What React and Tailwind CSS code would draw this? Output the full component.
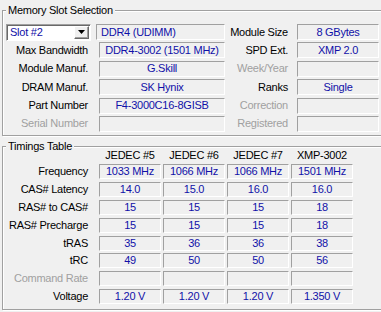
import React from "react";

const fieldCls =
  "h-full border border-t-[#a0a0a0] border-l-[#a0a0a0] border-b-white border-r-white flex items-center text-[#1010a8] whitespace-nowrap overflow-hidden";

function Field({ children, w, ml, left }) {
  return (
    <div className={fieldCls + (left ? " justify-start pl-[4px]" : " justify-center")} style={{ width: w, marginLeft: ml }}>
      {children}
    </div>
  );
}

function Label({ children, w, gray }) {
  return (
    <div
      className={"text-right whitespace-nowrap " + (gray ? "text-[#a0a0a0]" : "text-black")}
      style={{ width: w }}
    >
      {children}
    </div>
  );
}

function Group({ title, h, pt, children }) {
  return (
    <div
      className="relative ml-[2px] mt-[10px] w-[400px] border border-[#a0a0a0] shadow-[inset_1px_1px_0_#fff,1px_1px_0_#fff]"
      style={{ height: h, paddingTop: pt }}
    >
      <span className="absolute left-[3px] -top-[8px] px-[2px] bg-[#f0f0f0] leading-[14px] text-black whitespace-nowrap">
        {title}
      </span>
      {children}
    </div>
  );
}

const slotRows = [
  ["Max Bandwidth", false, "DDR4-3002 (1501 MHz)", "SPD Ext.", false, "XMP 2.0"],
  ["Module Manuf.", false, "G.Skill", "Week/Year", true, ""],
  ["DRAM Manuf.", false, "SK Hynix", "Ranks", false, "Single"],
  ["Part Number", false, "F4-3000C16-8GISB", "Correction", true, ""],
  ["Serial Number", true, "", "Registered", true, ""],
];

const timings = [
  ["Frequency", false, ["1033 MHz", "1066 MHz", "1066 MHz", "1501 MHz"]],
  ["CAS# Latency", false, ["14.0", "15.0", "16.0", "16.0"]],
  ["RAS# to CAS#", false, ["15", "15", "15", "18"]],
  ["RAS# Precharge", false, ["15", "15", "15", "18"]],
  ["tRAS", false, ["35", "36", "36", "38"]],
  ["tRC", false, ["49", "50", "50", "56"]],
  ["Command Rate", true, ["", "", "", ""]],
  ["Voltage", false, ["1.20 V", "1.20 V", "1.20 V", "1.350 V"]],
];

export default function App() {
  return (
    <div className="w-[381px] h-[312px] overflow-hidden bg-[#f0f0f0] font-['Liberation_Sans',Arial,sans-serif] text-[11px] tracking-[-0.25px] leading-[13px] pt-0 flex flex-col">
      <Group title="Memory Slot Selection" h="126px" pt="13px">
        <div className="flex flex-col gap-[2.4px]">
          <div className="flex items-center h-[16px]">
            <div className="ml-[3px] w-[85px] h-[17px] shrink-0 bg-white border border-t-[#a0a0a0] border-l-[#a0a0a0] border-b-white border-r-white shadow-[inset_1px_1px_0_#696969] flex items-center">
              <span className="pl-[3px] text-[#1010a8]">Slot #2</span>
              <div className="ml-auto mr-[1px] w-[15px] h-[13px] bg-[#f0f0f0] border border-t-white border-l-white border-b-[#696969] border-r-[#696969] shadow-[inset_-1px_-1px_0_#a0a0a0] flex items-center justify-center">
                <svg width="7" height="4" viewBox="0 0 7 4">
                  <polygon points="0,0 7,0 3.5,4" fill="#000" />
                </svg>
              </div>
            </div>
            <Field w="129px" ml="5px" left>DDR4 (UDIMM)</Field>
            <Label w="63px">Module Size</Label>
            <Field w="82px" ml="9px">8 GBytes</Field>
          </div>
          {slotRows.map(([l1, g1, v1, l2, g2, v2]) => (
            <div key={l1} className="flex items-center h-[16px]">
              <Label w="85px" gray={g1}>{l1}</Label>
              <Field w="126px" ml="11px">{v1}</Field>
              <Label w="63px" gray={g2}>{l2}</Label>
              <Field w="82px" ml="9px">{v2}</Field>
            </div>
          ))}
        </div>
      </Group>
      <Group title="Timings Table" h="164px" pt="0px">
        <div className="h-[17px] ml-[96px] grid grid-cols-[62px_62px_62px_62px] gap-x-[2px] items-center text-black">
          {["JEDEC #5", "JEDEC #6", "JEDEC #7", "XMP-3002"].map((t) => (
            <div key={t} className="text-center whitespace-nowrap">{t}</div>
          ))}
        </div>
        <div className="flex flex-col gap-[2.9px]">
          {timings.map(([label, gray, vals]) => (
            <div key={label} className="flex items-center h-[15px]">
              <Label w="85px" gray={gray}>{label}</Label>
              <div className="ml-[11px] h-full grid grid-cols-[62px_62px_62px_62px] gap-x-[2px]">
                {vals.map((v, i) => (
                  <div key={i} className={fieldCls + " justify-center"}>{v}</div>
                ))}
              </div>
            </div>
          ))}
        </div>
      </Group>
    </div>
  );
}
